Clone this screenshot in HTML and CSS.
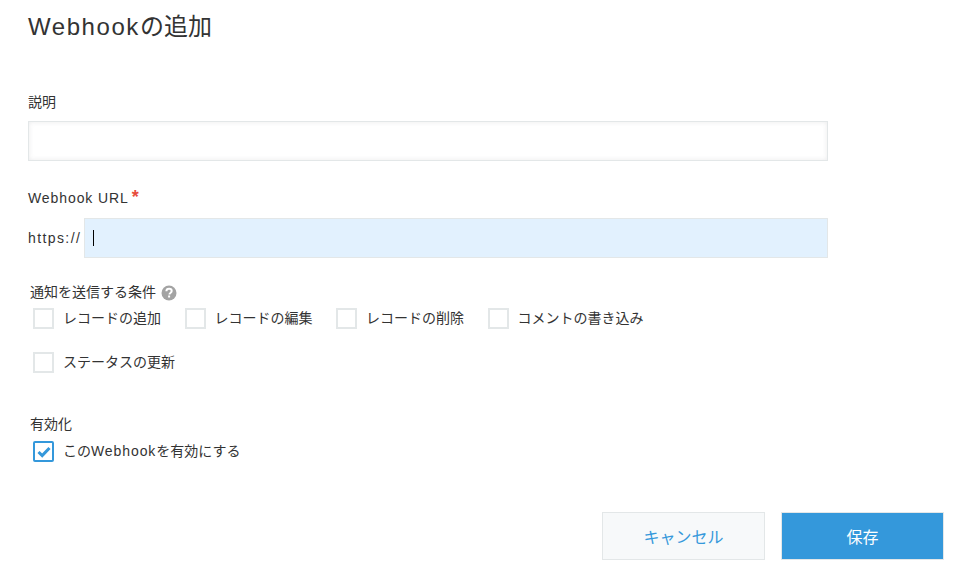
FILE: index.html
```html
<!DOCTYPE html>
<html lang="ja">
<head>
    <meta charset="UTF-8">
    <title>Webhookの追加</title>
    <link rel="stylesheet" href="styles.css">
</head>
<body>
    <div class="page">
        <h1><span class="latin">Webhook</span>の追加</h1>

        <form class="webhook-form">
            <div class="field field-desc">
                <label class="field-label" for="desc">説明</label>
                <input class="text-input" type="text" id="desc">
            </div>

            <div class="field field-url">
                <label class="field-label" for="url"><span class="latin">Webhook URL</span><span class="required">*</span></label>
                <div class="url-row">
                    <span class="url-prefix">https://</span>
                    <div class="text-input url-input" id="url"><span class="caret"></span></div>
                </div>
            </div>

            <div class="group group-events">
                <div class="group-label">
                    通知を送信する条件
                    <svg class="help-icon" width="16" height="16" viewBox="0 0 16 16">
                        <circle cx="8" cy="8" r="7.5" fill="#a3a3a3"/>
                        <path d="M5.4 6.2c0-1.5 1.2-2.4 2.7-2.4s2.6.9 2.6 2.2c0 1-.6 1.5-1.3 2-.6.4-.9.7-.9 1.4" fill="none" stroke="#fff" stroke-width="2"/>
                        <rect x="7.1" y="10.5" width="2" height="2" fill="#fff"/>
                    </svg>
                </div>
                <div class="check-row">
                    <label class="check"><span class="box"></span>レコードの追加</label>
                    <label class="check"><span class="box"></span>レコードの編集</label>
                    <label class="check"><span class="box"></span>レコードの削除</label>
                    <label class="check"><span class="box"></span>コメントの書き込み</label>
                </div>
                <div class="check-row">
                    <label class="check"><span class="box"></span>ステータスの更新</label>
                </div>
            </div>

            <div class="group group-active">
                <div class="group-label">有効化</div>
                <div class="check-row">
                    <label class="check">
                        <span class="box box-on">
                            <svg width="14" height="12" viewBox="0 0 14 12">
                                <path d="M1.5 6l3.7 3.6L12.5 2" fill="none" stroke="#3498db" stroke-width="3"/>
                            </svg>
                        </span>この<span class="latin">Webhook</span>を有効にする
                    </label>
                </div>
            </div>

            <div class="actions">
                <button type="button" class="btn btn-cancel">キャンセル</button>
                <button type="button" class="btn btn-save">保存</button>
            </div>
        </form>
    </div>
</body>
</html>
```

FILE: styles.css
```css
* {
    box-sizing: border-box;
}
body {
    margin: 0;
    background-color: #fff;
    color: #333;
    font-family: "Liberation Sans", "Noto Sans CJK JP", sans-serif;
    font-size: 14px;
}
.page {
    width: 954px;
    height: 578px;
    padding: 0 10px 0 28px;
    overflow: hidden;
}
.latin {
    letter-spacing: 0.065em;
}
h1 {
    margin: 0;
    padding-top: 9px;
    height: 92px;
    font-size: 24px;
    font-weight: 400;
    line-height: 36px;
    color: #333;
}
.field-label {
    display: block;
    height: 20px;
    line-height: 20px;
}
.field-desc .field-label {
    margin-bottom: 9px;
}
.text-input {
    display: block;
    width: 800px;
    height: 40px;
    border: 1px solid #e3e7e8;
    background-color: #fff;
    box-shadow: inset 0 0 5px rgba(55,61,65,0.1);
    outline: none;
}
.field-url {
    margin-top: 27px;
}
.field-url .field-label {
    margin-bottom: 10px;
}
.required {
    color: #e74c3c;
    margin-left: 3px;
    font-size: 18px;
    font-weight: 700;
    line-height: 0;
}
.url-row {
    display: flex;
    align-items: center;
}
.url-prefix {
    width: 56px;
    flex: none;
    letter-spacing: 1.4px;
}
.url-input {
    width: 744px;
    background-color: #e2f1fe;
    box-shadow: none;
    padding: 11px 0 0 8px;
}
.caret {
    display: block;
    width: 1px;
    height: 16px;
    background-color: #000;
}
.group {
    padding-left: 2px;
}
.group-events {
    margin-top: 24px;
}
.group-active {
    margin-top: 24px;
}
.group-label {
    display: flex;
    align-items: center;
    gap: 5px;
    height: 20px;
    line-height: 20px;
}
.help-icon {
    display: block;
    margin-top: 2px;
}
.check-row {
    display: flex;
    height: 44px;
    padding: 6px 0 0 3px;
}
.group-active .check-row {
    padding-top: 7px;
}
.check {
    display: flex;
    align-items: flex-start;
    line-height: 21px;
    margin-right: 23.5px;
    white-space: nowrap;
}
.box {
    display: flex;
    align-items: center;
    justify-content: center;
    width: 21px;
    height: 21px;
    flex: none;
    margin-right: 9px;
    border: 2px solid #e3e7e8;
    background-color: #fff;
}
.box-on {
    border-color: #3498db;
    border-radius: 2px;
}
.actions {
    display: flex;
    justify-content: flex-end;
    gap: 16px;
    margin-top: 34px;
}
.btn {
    width: 163px;
    height: 48px;
    border: 1px solid #e3e7e8;
    font-family: inherit;
    font-size: 16px;
    padding: 0;
}
.btn-cancel {
    background-color: #f7f9fa;
    color: #3498db;
}
.btn-save {
    background-color: #3498db;
    color: #fff;
}
```
